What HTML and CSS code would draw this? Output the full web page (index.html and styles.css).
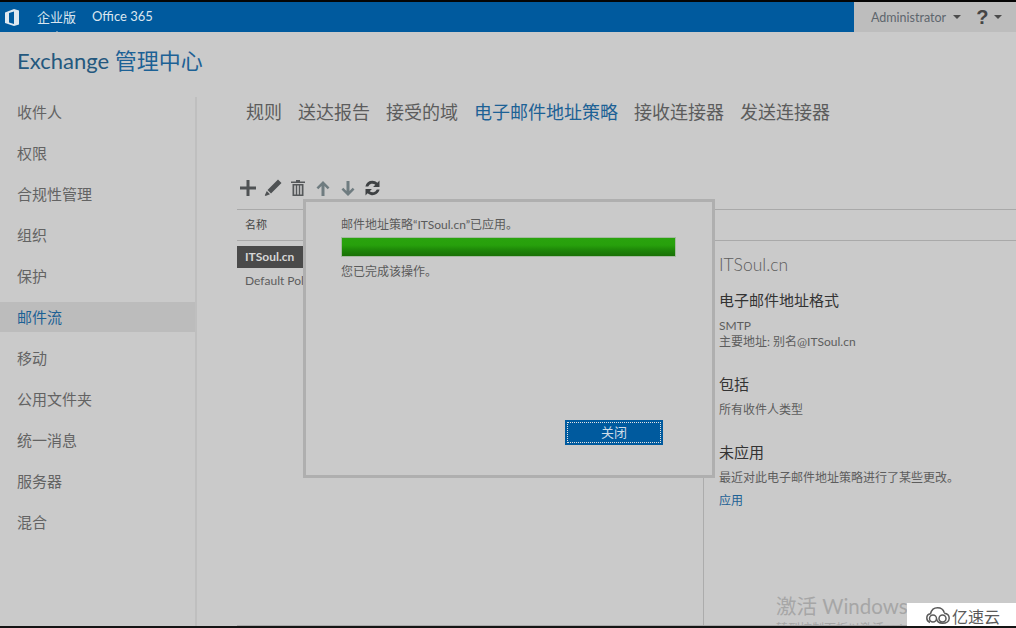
FILE: index.html
```html
<!DOCTYPE html>
<html lang="en">
<head>
    <meta charset="UTF-8">
    <title>Exchange 管理中心</title>
    <link rel="stylesheet" href="styles.css">
</head>
<body>
    <div class="app">
        <div class="topbar">
            <div class="topbar-left">
                <svg class="office-logo" width="14" height="17" viewBox="0 0 14 17"><path fill="#dfe8f0" fill-rule="evenodd" d="M0 3.500 9 0l5 1.500v14L9 17 0 14zM9 2.500 4 4v9.500l5 1.500z"/></svg>
                <span class="top-link current">企业版</span>
                <span class="top-link">Office 365</span>
            </div>
            <div class="topbar-right">
                <span class="admin">Administrator</span>
                <span class="caret"></span>
                <span class="help">?</span>
                <span class="caret"></span>
            </div>
        </div>
        <div class="title-row">
            <h1 class="title">Exchange <span>管理中心</span></h1>
        </div>
        <div class="main">
            <div class="sidebar">
                <div class="nav-item">收件人</div>
                <div class="nav-item">权限</div>
                <div class="nav-item">合规性管理</div>
                <div class="nav-item">组织</div>
                <div class="nav-item">保护</div>
                <div class="nav-item active">邮件流</div>
                <div class="nav-item">移动</div>
                <div class="nav-item">公用文件夹</div>
                <div class="nav-item">统一消息</div>
                <div class="nav-item">服务器</div>
                <div class="nav-item">混合</div>
            </div>
            <div class="content">
                <div class="tabs">
                    <span class="tab">规则</span>
                    <span class="tab">送达报告</span>
                    <span class="tab">接受的域</span>
                    <span class="tab active">电子邮件地址策略</span>
                    <span class="tab">接收连接器</span>
                    <span class="tab">发送连接器</span>
                </div>
                <div class="toolbar">
                    <span class="tool"><svg width="16" height="16" viewBox="0 0 16 16"><path fill="#4f5254" d="M6.500 0h3v6.500H16v3H9.500V16h-3V9.500H0v-3h6.500z"/></svg></span>
                    <span class="tool"><svg width="18" height="18" viewBox="0 0 18 18"><path fill="#4f5254" d="M14 .5 17.500 4 7 14.500 3.500 11zM2.800 12 6 15.200 1.500 17 .8 16.300z"/></svg></span>
                    <span class="tool"><svg width="14" height="16" viewBox="0 0 14 16"><path fill="#55585a" fill-rule="evenodd" d="M5 0h4v1.500h5V3H0V1.500h5zM1.500 4h11v12h-11zM3.200 5.500v9h1.600v-9zM6.200 5.500v9h1.600v-9zM9.200 5.500v9h1.600v-9z"/></svg></span>
                    <span class="tool"><svg width="14" height="15" viewBox="0 0 14 15"><path fill="#6f7c80" d="M7 0l6.500 6.500-1.800 1.800L8.500 5.100V15h-3V5.100L2.300 8.300.5 6.500z"/></svg></span>
                    <span class="tool"><svg width="14" height="15" viewBox="0 0 14 15"><path fill="#6f7c80" d="M7 15 .5 8.500l1.800-1.800 3.200 3.200V0h3v9.900l3.200-3.200 1.800 1.800z"/></svg></span>
                    <span class="tool"><svg width="17" height="16" viewBox="0 0 17 16"><path fill="#3e4143" d="M8.500 0.800a7.300 7.300 0 0 1 4.900 1.900L15.500.6V7H9.100l2.200-2.200A4.500 4.500 0 0 0 4.200 6.500H1.400A7.300 7.300 0 0 1 8.500 0.800zM1.500 9h6.400l-2.200 2.200a4.500 4.500 0 0 0 7.100-1.700h2.800A7.300 7.300 0 0 1 3.600 13.300L1.500 15.400z"/></svg></span>
                </div>
                <div class="table-head">
                    <span class="col-name">名称</span>
                </div>
                <div class="table-body">
                    <div class="list">
                        <div class="row selected">ITSoul.cn</div>
                        <div class="row">Default Policy</div>
                    </div>
                    <div class="details">
                        <h2 class="detail-name">ITSoul.cn</h2>
                        <div class="detail-block">
                            <h3 class="detail-head">电子邮件地址格式</h3>
                            <p class="detail-text">SMTP<br>主要地址: 别名@ITSoul.cn</p>
                        </div>
                        <div class="detail-block">
                            <h3 class="detail-head">包括</h3>
                            <p class="detail-text">所有收件人类型</p>
                        </div>
                        <div class="detail-block">
                            <h3 class="detail-head">未应用</h3>
                            <p class="detail-text">最近对此电子邮件地址策略进行了某些更改。</p>
                            <a class="detail-link">应用</a>
                        </div>
                    </div>
                </div>
            </div>
        </div>
        <div class="dialog">
            <p class="dialog-text">邮件地址策略“ITSoul.cn”已应用。</p>
            <div class="progress"></div>
            <p class="dialog-text">您已完成该操作。</p>
            <div class="dialog-foot">
                <button class="close-btn"><span>关闭</span></button>
            </div>
        </div>
        <div class="watermark">激活 Windows<small>转到控制面板以激活 Windows。</small></div>
        <div class="site-logo">
            <svg width="24" height="17" viewBox="0 0 24 17"><g fill="none" stroke="#5a5a5a" stroke-width="1.500"><path d="M4 15.500C1.500 14.500.8 12.500.8 11c0-2.500 1.700-4 3.700-4.300C5.500 3 8.500.8 11.500.8c3.500 0 6 2.200 6.800 5"/><circle cx="7" cy="11.500" r="3.500"/><circle cx="16.500" cy="11.500" r="3.500"/><path d="M10.500 12c.5 2.500 2.500 4.200 6 4.200 4 0 6.700-2 6.700-5 0-2.500-2-4.700-5-5"/></g></svg>
            <span>亿速云</span>
        </div>
    </div>
</body>
</html>
```

FILE: styles.css
```css
*{
    padding: 0;
    margin: 0;
    box-sizing: border-box;
}
body{
    background-color: #cacaca;
    font-family: Lato, "Noto Sans CJK SC", sans-serif;
    color: #5d5d5d;
    overflow: hidden;
}
.app{
    position: relative;
    width: 1016px;
    height: 628px;
    overflow: hidden;
    display: flex;
    flex-direction: column;
    border-top: 2px solid #050505;
    border-bottom: 2px solid #141414;
}
.topbar{
    height: 30px;
    flex: none;
    display: flex;
    justify-content: space-between;
    background: #005a9e;
}
.topbar-left{
    display: flex;
    align-items: center;
    padding-left: 5px;
}
.office-logo{
    margin-right: 18px;
}
.top-link{
    position: relative;
    top: -1px;
    font-size: 13px;
    color: #dbe6ef;
    margin-right: 16px;
}
.top-link.current::after{
    content: "";
    position: absolute;
    left: 16px;
    bottom: -9px;
    border: 4px solid transparent;
    border-top-width: 0;
    border-bottom-color: #cacaca;
}
.topbar-right{
    width: 162px;
    background: #bdbdbd;
    display: flex;
    align-items: center;
    padding-left: 17px;
    color: #5e666d;
}
.admin{
    font-size: 12.500px;
    margin-right: 7px;
}
.caret{
    width: 0;
    height: 0;
    border: 4px solid transparent;
    border-top: 4px solid #4c4c4c;
    border-bottom-width: 0;
}
.help{
    font-family: "Liberation Sans", sans-serif;
    font-size: 20px;
    font-weight: 700;
    color: #454545;
    margin: 0 6px 0 15px;
}
.title-row{
    height: 65px;
    flex: none;
    padding: 12px 0 0 17px;
}
.title{
    font-size: 22px;
    font-weight: 400;
    line-height: 34px;
    color: #24587e;
}
.title span{
    color: #1c6195;
}
.main{
    flex: 1;
    display: flex;
    min-height: 0;
}
.sidebar{
    width: 197px;
    flex: none;
    border-right: 2px solid #bfbfbf;
}
.nav-item{
    height: 30px;
    line-height: 30px;
    margin-bottom: 11px;
    padding-left: 17px;
    font-size: 15px;
    color: #636363;
}
.nav-item.active{
    background: #bcbcbc;
    color: #1c6195;
}
.content{
    flex: 1;
    min-width: 0;
    display: flex;
    flex-direction: column;
    padding-left: 40px;
}
.tabs{
    height: 30px;
    flex: none;
    display: flex;
    gap: 16px;
    padding-left: 9px;
    font-size: 18px;
    line-height: 30px;
    color: #5c5c5c;
}
.tab.active{
    color: #1c6195;
}
.toolbar{
    height: 18px;
    margin: 52px 0 0 -2px;
    flex: none;
    display: flex;
    align-items: center;
}
.tool{
    width: 25px;
    height: 18px;
    display: flex;
    align-items: center;
    justify-content: center;
}
.table-head{
    height: 32px;
    margin-top: 12px;
    flex: none;
    padding-left: 8px;
    border-top: 1px solid #a9a9a9;
    border-bottom: 1px solid #a9a9a9;
    font-size: 11px;
    line-height: 30px;
    color: #454545;
}
.table-body{
    flex: 1;
    display: flex;
    min-height: 0;
    border-bottom: 1px solid #a9a9a9;
}
.list{
    width: 467px;
    flex: none;
    padding-top: 5px;
    border-right: 1px solid #acacac;
}
.row{
    height: 22px;
    width: 200px;
    margin-bottom: 2px;
    padding-left: 8px;
    font-size: 12px;
    line-height: 22px;
    color: #5d5d5d;
}
.row.selected{
    background: #4a4a4a;
    color: #d6d6d6;
    font-weight: 700;
}
.details{
    flex: 1;
    padding: 12px 0 0 15px;
}
.detail-name{
    font-size: 17.500px;
    font-weight: 300;
    line-height: 24px;
    color: #5d5d5d;
    margin-bottom: 12px;
}
.detail-block{
    margin-bottom: 23px;
}
.detail-head{
    font-size: 15px;
    font-weight: 400;
    line-height: 22px;
    color: #333;
    margin-bottom: 7px;
}
.detail-text{
    font-size: 12px;
    line-height: 16px;
    color: #5d5d5d;
}
.detail-link{
    display: block;
    font-size: 12px;
    line-height: 16px;
    margin-top: 7px;
    color: #1c6195;
}
.dialog{
    position: absolute;
    left: 303px;
    top: 197px;
    width: 412px;
    height: 279px;
    background: #cacaca;
    border: 3px solid #afafaf;
    padding: 14px 35px 0 35px;
    display: flex;
    flex-direction: column;
}
.dialog-text{
    font-size: 12px;
    line-height: 18px;
    color: #5a5a5a;
}
.progress{
    width: 335px;
    height: 20px;
    margin: 3px 0 6px;
    background: linear-gradient(#2aa30e 0, #27a00c 40%, #1d8408 70%, #197006 100%);
    border: 1px solid #a5b9a0;
}
.dialog-foot{
    display: flex;
    justify-content: flex-end;
    padding: 139px 14px 0 0;
}
.close-btn{
    width: 98px;
    height: 25px;
    background: #005a9e;
    border: 0;
    padding: 2px;
    font-family: inherit;
    font-size: 13px;
    color: #cfdde9;
}
.close-btn span{
    display: block;
    height: 100%;
    line-height: 19px;
    border: 1px dotted #e4e4e4;
}
.watermark{
    position: absolute;
    left: 776px;
    top: 591px;
    width: 240px;
    font-size: 20.500px;
    line-height: 27px;
    color: #a6a6a6;
}
.watermark small{
    display: block;
    margin-top: 2px;
    font-size: 12px;
    line-height: 14px;
}
.site-logo{
    position: absolute;
    right: 0;
    bottom: -2px;
    width: 109px;
    height: 25px;
    background: #fff;
    display: flex;
    align-items: center;
    gap: 2px;
    padding-left: 19px;
    font-size: 16px;
    color: #5a5a5a;
}
```
